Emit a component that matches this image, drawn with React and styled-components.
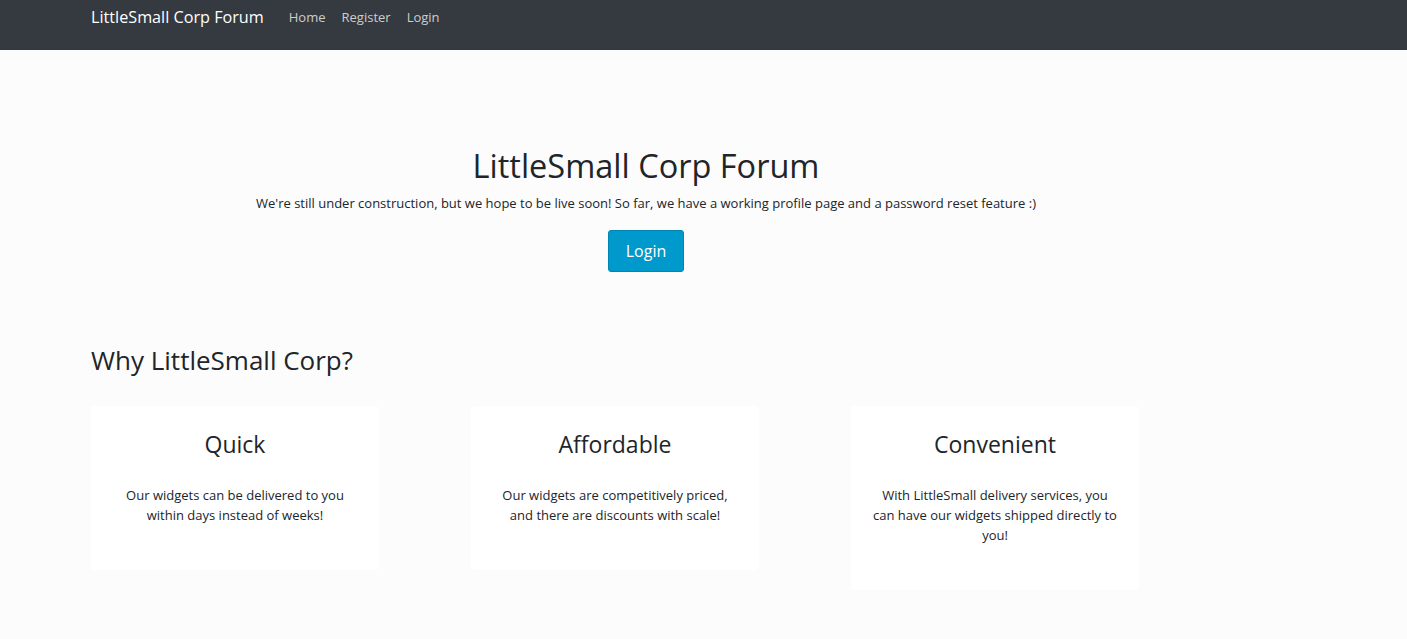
import React from 'react';
import styled, { createGlobalStyle } from 'styled-components';

const GlobalStyle = createGlobalStyle`
    html, body {
        margin: 0;
        padding: 0;
        background: #fcfcfc;
        font-family: "Open Sans", "Liberation Sans", sans-serif;
        color: #212529;
    }
`;

const Navbar = styled.nav`
    background: #343a40;
    height: 50px;
    box-sizing: border-box;
    padding: 6px 0 0 91px;
    display: flex;
    align-items: flex-start;
`;

const Brand = styled.a`
    color: #ffffff;
    font-size: 16.2px;
    line-height: 22px;
    margin-right: 25px;
    text-decoration: none;
`;

const NavLinks = styled.div`
    display: flex;
    gap: 16px;
    padding-top: 1px;
`;

const NavLink = styled.a`
    color: rgba(255, 255, 255, 0.75);
    font-size: 13px;
    line-height: 20px;
    text-decoration: none;
`;

const Container = styled.div`
    width: 1140px;
    margin-left: 76px;
    box-sizing: border-box;
    padding: 0 15px;
`;

const Hero = styled.section`
    text-align: center;
    padding: 94px 0 0;
`;

const HeroTitle = styled.h1`
    font-size: 32.5px;
    font-weight: 400;
    line-height: 44px;
    margin: 0 0 5px;
`;

const Lead = styled.p`
    font-size: 13px;
    line-height: 20px;
    margin: 0 0 17px;
`;

const LoginButton = styled.button`
    font-family: inherit;
    font-size: 16px;
    color: #ffffff;
    background: #0099cc;
    border: 1px solid #0086b3;
    border-radius: 3px;
    width: 76px;
    height: 42px;
    cursor: pointer;
`;

const SectionTitle = styled.h2`
    font-size: 26px;
    font-weight: 400;
    line-height: 36px;
    margin: 70px 0 28px;
`;

const CardRow = styled.div`
    display: grid;
    grid-template-columns: repeat(3, 380px);
    align-items: start;
    margin: 0 -15px;
    padding-bottom: 50px;
`;

const Cell = styled.div`
    padding: 0 15px;
`;

const Card = styled.div`
    background: #ffffff;
    border-radius: 4px;
    width: 288px;
    box-sizing: border-box;
    padding: 23px 20px 29px;
    text-align: center;
`;

const CardTitle = styled.h3`
    font-size: 23px;
    font-weight: 400;
    line-height: 30px;
    margin: 0 0 26px;
`;

const CardText = styled.p`
    font-size: 13px;
    line-height: 20px;
    margin: 0 0 16px;
`;

const features = [
    { title: 'Quick', text: 'Our widgets can be delivered to you within days instead of weeks!' },
    { title: 'Affordable', text: 'Our widgets are competitively priced, and there are discounts with scale!' },
    { title: 'Convenient', text: 'With LittleSmall delivery services, you can have our widgets shipped directly to you!' }
];

export default function App() {
    return (
        <>
            <GlobalStyle />
            <Navbar>
                <Brand href="#">LittleSmall Corp Forum</Brand>
                <NavLinks>
                    <NavLink href="#">Home</NavLink>
                    <NavLink href="#">Register</NavLink>
                    <NavLink href="#">Login</NavLink>
                </NavLinks>
            </Navbar>
            <Container>
                <Hero>
                    <HeroTitle>LittleSmall Corp Forum</HeroTitle>
                    <Lead>
                        We're still under construction, but we hope to be live soon! So far, we have a working profile page and a password reset feature :)
                    </Lead>
                    <LoginButton>Login</LoginButton>
                </Hero>
                <SectionTitle>Why LittleSmall Corp?</SectionTitle>
                <CardRow>
                    {features.map(f => (
                        <Cell key={f.title}>
                            <Card>
                                <CardTitle>{f.title}</CardTitle>
                                <CardText>{f.text}</CardText>
                            </Card>
                        </Cell>
                    ))}
                </CardRow>
            </Container>
        </>
    );
}
